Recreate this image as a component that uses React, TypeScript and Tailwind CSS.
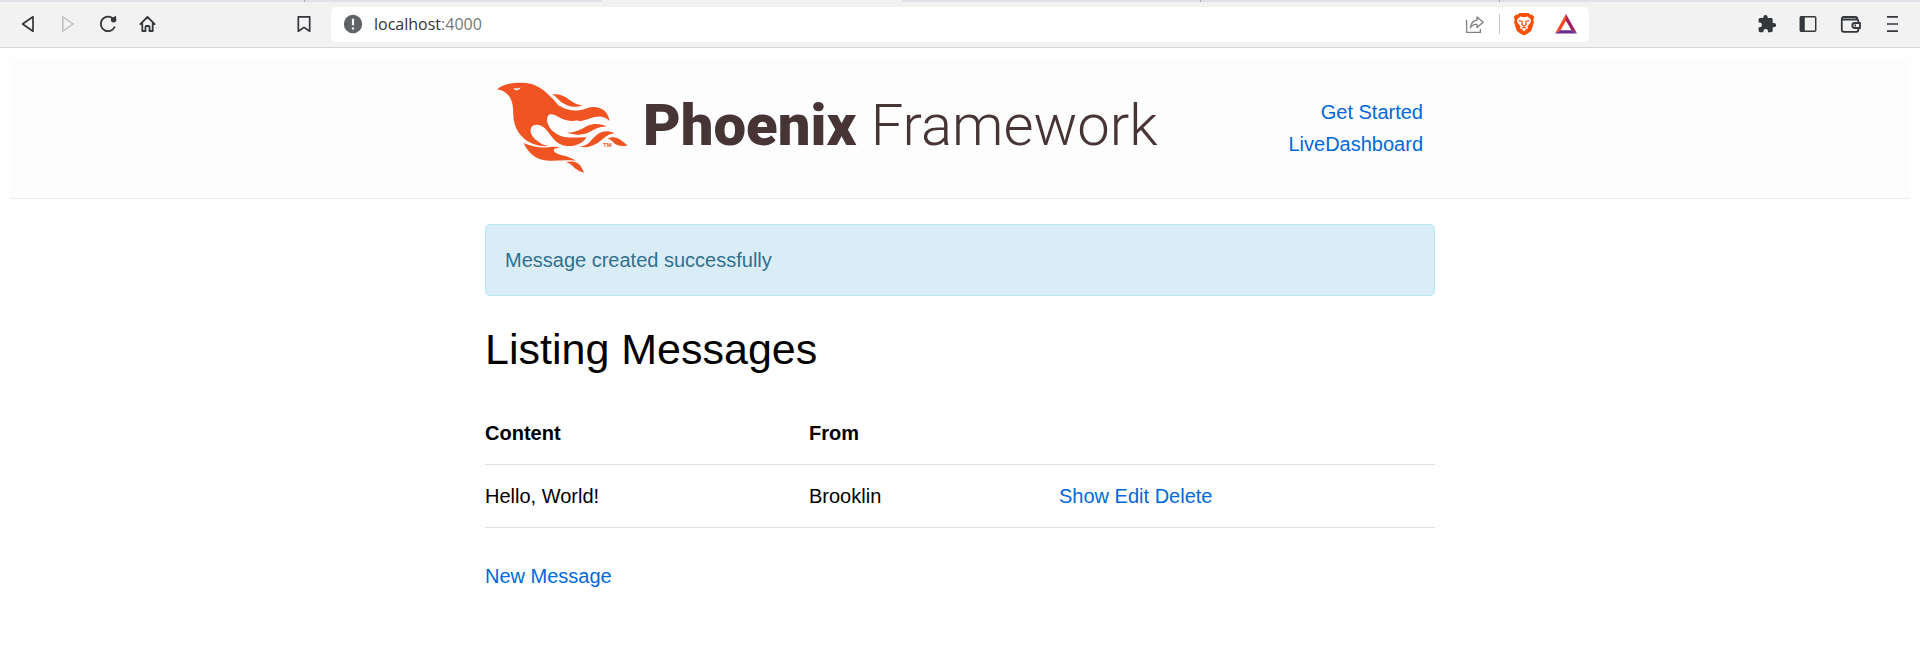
import React from "react";

const linkClass = "text-[#0069d9] hover:text-[#606c76]";

function IconButton({ label, children, disabled }: { label: string; children: React.ReactNode; disabled?: boolean }) {
  return (
    <button type="button" aria-label={label} disabled={disabled} className="flex size-6 shrink-0 items-center justify-center">
      {children}
    </button>
  );
}

function TabStrip() {
  return (
    <div className="flex h-[2px] bg-[#dee1e6]">
      <div className="w-[304px] shrink-0" />
      <div className="w-[298px] shrink-0 border-l border-[#a5a9ae]" />
      <div className="w-[300px] shrink-0 bg-[#f2f2f2]" />
      <div className="w-[298px] shrink-0" />
      <div className="w-[299px] shrink-0 border-l border-[#a5a9ae]" />
      <div className="grow border-l border-[#a5a9ae]" />
    </div>
  );
}

function Toolbar() {
  return (
    <div className="flex h-[46px] items-center border-b border-[#d5d5d5] bg-[#f2f2f2]">
      <div className="flex w-[331px] shrink-0 items-center pr-[15px] pb-px pl-4">
        <div className="flex gap-4">
          <IconButton label="Back">
            <svg width="24" height="24" fill="none" stroke="#34373b" strokeWidth="1.7" strokeLinejoin="round">
              <path d="M17 4.8V19.2L6.6 12z" />
            </svg>
          </IconButton>
          <IconButton label="Forward" disabled>
            <svg width="24" height="24" fill="none" stroke="#bfc1c3" strokeWidth="1.5" strokeLinejoin="round">
              <path d="M6.8 4.8V19.2L17.2 12z" />
            </svg>
          </IconButton>
          <IconButton label="Reload">
            <svg width="24" height="24" fill="none" stroke="#34373b" strokeWidth="1.8" strokeLinecap="round">
              <path d="M18.6 15.2A7.3 7.3 0 1 1 15.6 5.5" />
              <circle cx="17.6" cy="7.8" r="2.7" fill="#34373b" stroke="none" />
              <path d="M19.2 5V8" />
            </svg>
          </IconButton>
          <IconButton label="Home">
            <svg width="24" height="24" fill="none" stroke="#34373b" strokeWidth="1.8" strokeLinecap="round" strokeLinejoin="round">
              <path d="M4.3 12.2L11.5 5l7.2 7.2M6.300 11v8h3.200v-4.200a.8.8 0 0 1 .8-.8h2.400a.8.8 0 0 1 .8.8V19h3.200v-8" />
            </svg>
          </IconButton>
        </div>
        <div className="ml-auto">
          <IconButton label="Bookmark this tab">
            <svg width="24" height="24" fill="none" stroke="#34373b" strokeWidth="1.7" strokeLinejoin="round">
              <path d="M6.3 4.8h11.4v14.4L12 15.4l-5.7 3.800z" />
            </svg>
          </IconButton>
        </div>
      </div>

      <div className="flex h-[35px] min-w-0 flex-1 items-center rounded-[5px] bg-white pr-[11px] pb-px pl-3">
        <svg width="20" height="20" className="shrink-0" aria-hidden="true">
          <circle cx="10" cy="10" r="9.2" fill="#5f6368" />
          <path d="M10 4.8v6.4M10 13.4v2" stroke="#fff" strokeWidth="2.2" />
        </svg>
        <div
          role="textbox"
          aria-label="Address"
          className="ml-[11px] flex-1 font-['Open_Sans','Noto_Sans',sans-serif] text-[16px] leading-6 text-[#303336]"
        >
          localhost<span className="text-[#73777b]">:4000</span>
        </div>
        <div className="flex items-center">
          <IconButton label="Share">
            <svg width="24" height="24" fill="none" stroke="#7c7f83" strokeWidth="1.3" strokeLinejoin="round">
              <path d="M3.6 8v12.4h13.8V17" />
              <path d="M14 5l6.2 5.2L14 15.6v-3.2c-3.3-.2-5.4 1-6.6 3.4.4-4.6 2.7-7.2 6.6-7.7z" />
            </svg>
          </IconButton>
          <div className="mx-3 h-5 w-px bg-[#c4c6c9]" />
          <IconButton label="Shields">
            <svg width="24" height="24">
              <path d="M7.4 1h9.2l1.6 1.7 2-.2 2 2.7-.9 2.400.7 2.300-2.400 8.200c-.5 1.600-5.600 5-7.600 5.100-2-.1-7.100-3.500-7.600-5.100L2 9.900l.7-2.300-.9-2.400 2-2.700 2 .2z" fill="#fc4f0a" />
              <path d="M8.2 4.6l3.8.6 3.8-.6 3.4 3.5-1 3-2.700 3.200.5 1.900-2.200 1.300L12 19.400l-1.800-1.900L8 16.200l.5-1.900-2.700-3.200-1-3z" fill="#fff" />
              <path d="M6.5 8.500l3.800.8M17.500 8.500l-3.800.8M10.500 9.300l-.7 3.400 2.200 1.100 2.200-1.100-.7-3.400M12 13.800v1.400M9.700 16.300l2.300-1.100 2.300 1.100" fill="none" stroke="#fc4f0a" strokeWidth="1.2" />
            </svg>
          </IconButton>
          <div className="ml-[18px]">
            <IconButton label="Rewards">
              <svg width="24" height="24">
                <path d="M12 2L1 21.500l5.600-3.200L12 8.800z" fill="#ff4724" />
                <path d="M12 2l11 19.500-5.600-3.200L12 8.800z" fill="#9e1f63" />
                <path d="M1 21.500h22l-5.600-3.200H6.600z" fill="#662d91" />
              </svg>
            </IconButton>
          </div>
        </div>
      </div>

      <div className="flex w-[331px] shrink-0 items-center justify-end gap-[18px] pr-[15px] pb-px">
        <IconButton label="Extensions">
          <svg width="24" height="24" fill="#34373b">
            <path d="M19 11h-1.300V7.600c0-1-.7-1.700-1.700-1.700h-3.300V5.200a2.200 2.200 0 0 0-4.400 0v.7H5.200c-1 0-1.600.7-1.600 1.700v3h1a2.300 2.300 0 0 1 0 4.600h-1v3.400c0 1 .7 1.700 1.600 1.700h3.200v-1a2.300 2.300 0 0 1 4.600 0v1H16c1 0 1.700-.7 1.700-1.700v-3.300H19a2.150 2.150 0 0 0 0-4.300z" />
          </svg>
        </IconButton>
        <IconButton label="Sidebar">
          <svg width="24" height="24">
            <rect x="3.3" y="4.8" width="15.4" height="14.4" rx="1" fill="none" stroke="#34373b" strokeWidth="1.5" />
            <path d="M3 4.500h4.800v15H3z" fill="#34373b" />
          </svg>
        </IconButton>
        <IconButton label="Wallet">
          <svg width="24" height="24" fill="none" stroke="#34373b" strokeWidth="1.800" strokeLinejoin="round">
            <path d="M2.8 7.500v10.300a2 2 0 0 0 2 2h12.600a2 2 0 0 0 2-2v-1.800M2.800 7.500a2 2 0 0 1 2-2.500h11.600a2 2 0 0 1 2 2v.5M2.800 7.500h14.600a2 2 0 0 1 2 2v1.500" />
            <path d="M21 11h-5.200a2.500 2.500 0 0 0 0 5H21zM15.500 13.500h1.500" />
          </svg>
        </IconButton>
        <IconButton label="Menu">
          <svg width="24" height="24" stroke="#34373b" strokeWidth="1.7">
            <path d="M6 4.800h11M6 12h11M6 19.200h11" />
          </svg>
        </IconButton>
      </div>
    </div>
  );
}

function PhoenixMark() {
  return (
    <svg width="134" height="94" viewBox="0 0 134 94" className="shrink-0" fill="#f05423" aria-hidden="true">
      <path
        fillRule="evenodd"
        d="M0 8.500C6 3 16 1.400 26 1.700c14 .4 22 8.300 29.500 15.800C62 24.200 66 33 84 37.500c-5 3.800-15 2.800-21-.8-4.500-2.700-9.500-5.300-12-2-2.500 4 0 11.300 6 16.300 9 8 20 5 32.500 5.200-3 5-9 8.800-18 8.800C59 65 55 55 49 48.500c-4-4.500-11-6.800-14.500-2.500-3 5 1.500 11 5.500 13.500 3 2.400 5 4.500 12 5.500-9 .8-19-2-25-7.500C16 47.500 16.500 37 16 28 15.600 17 10 9.500 0 8.500zM16.500 7.300c.4 2.600 6 3 7-.7-2.300.9-4.700 1-7 .7z"
      />
      <path d="M55 13.500c7-1 12 1.200 17 5 4.500 3.200 9 6.300 14 5.200C77 28.500 68 24.500 62 19c-2.500-2.500-4-4.500-7-5.500z" />
      <path d="M61.500 24C70 30 80 31 89 27.500c11-4 22 .5 23.500 12.500-10-9-17-2-29 .2C73 38 67 33 61.500 24z" />
      <path d="M70 51.500c8 .4 14-3 20-6.500 8-3.500 16-1.500 19.500.5-8 0-12 3-17 5.500-8 4-16 3-22.500.5z" />
      <path d="M83 65.500c9-.5 10-6 16-11 5.500-4.500 12-5.500 18.500-2.200-8 .7-11 6.200-17 9.700-6 3.700-12 5.300-17.500 3.500z" />
      <path d="M110.500 57.500c9-3.500 13 1 20 7-7 1.500-11 0-14-3-1.500-1.500-3-3.500-6-4z" />
      <path d="M26.500 62c8 3.500 18 5.600 29 3.800 3-.4 5 0 7.500 1.200-4-.5-7 .7-6 3.200 3 4.300 14 3.800 22 9.500-10-1-16 .4-27 0C39 79 32 73 26.500 62z" />
      <path d="M68.500 81c8-1.500 13 0 16 5.500.8 1.500 1.600 3 2.500 5-6-1.500-9-4-12-7-2-2-4-3-6.500-3.500z" />
      <text x="106" y="66" fontFamily="Liberation Sans, sans-serif" fontSize="6" fontWeight="700">
        TM
      </text>
    </svg>
  );
}

function SiteHeader() {
  return (
    <header className="mx-[10px] mt-[10px] border-b border-[#eaeaea] bg-[#fdfdfd]">
      <div className="mx-auto flex w-full max-w-[950px] items-center justify-between px-3 py-[23px]">
        <a href="/" className="flex items-start gap-3 font-['Roboto',sans-serif] text-[58px] leading-[88px] text-[#473536]">
          <PhoenixMark />
          <span className="whitespace-nowrap">
            <span className="font-black">Phoenix</span> <span className="font-light">Framework</span>
          </span>
        </a>
        <nav>
          <ul className="text-right leading-8">
            <li>
              <a href="/get-started" className={linkClass}>Get Started</a>
            </li>
            <li>
              <a href="/dashboard" className={linkClass}>LiveDashboard</a>
            </li>
          </ul>
        </nav>
      </div>
    </header>
  );
}

function MessagesTable() {
  const cell = "border-b border-[#e1e1e1] py-[15px] text-left";
  return (
    <table className="w-full table-fixed border-collapse">
      <colgroup>
        <col className="w-[324px]" />
        <col className="w-[250px]" />
        <col />
      </colgroup>
      <thead>
        <tr>
          <th className={cell}>Content</th>
          <th className={cell}>From</th>
          <th className={cell} aria-label="Actions" />
        </tr>
      </thead>
      <tbody>
        <tr>
          <td className={cell}>Hello, World!</td>
          <td className={cell}>Brooklin</td>
          <td className={cell}>
            <a href="/messages/1" className={linkClass}>Show</a>{" "}
            <a href="/messages/1/edit" className={linkClass}>Edit</a>{" "}
            <a href="/messages/1/delete" className={linkClass}>Delete</a>
          </td>
        </tr>
      </tbody>
    </table>
  );
}

export default function App() {
  return (
    <div className="min-h-screen bg-white font-['Liberation_Sans',Arial,sans-serif] text-[20px] leading-8 text-black">
      <TabStrip />
      <Toolbar />
      <SiteHeader />
      <main className="mx-auto w-full max-w-[950px] pt-[25px]">
        <p role="alert" className="rounded-[5px] border border-[#bce8f1] bg-[#d9edf7] px-[19px] py-[19px] text-[#31708f]">
          Message created successfully
        </p>
        <h1 className="mt-[25px] mb-[25px] text-[43px] leading-[56px]">Listing Messages</h1>
        <MessagesTable />
        <p className="mt-8">
          <a href="/messages/new" className={linkClass}>New Message</a>
        </p>
      </main>
    </div>
  );
}
